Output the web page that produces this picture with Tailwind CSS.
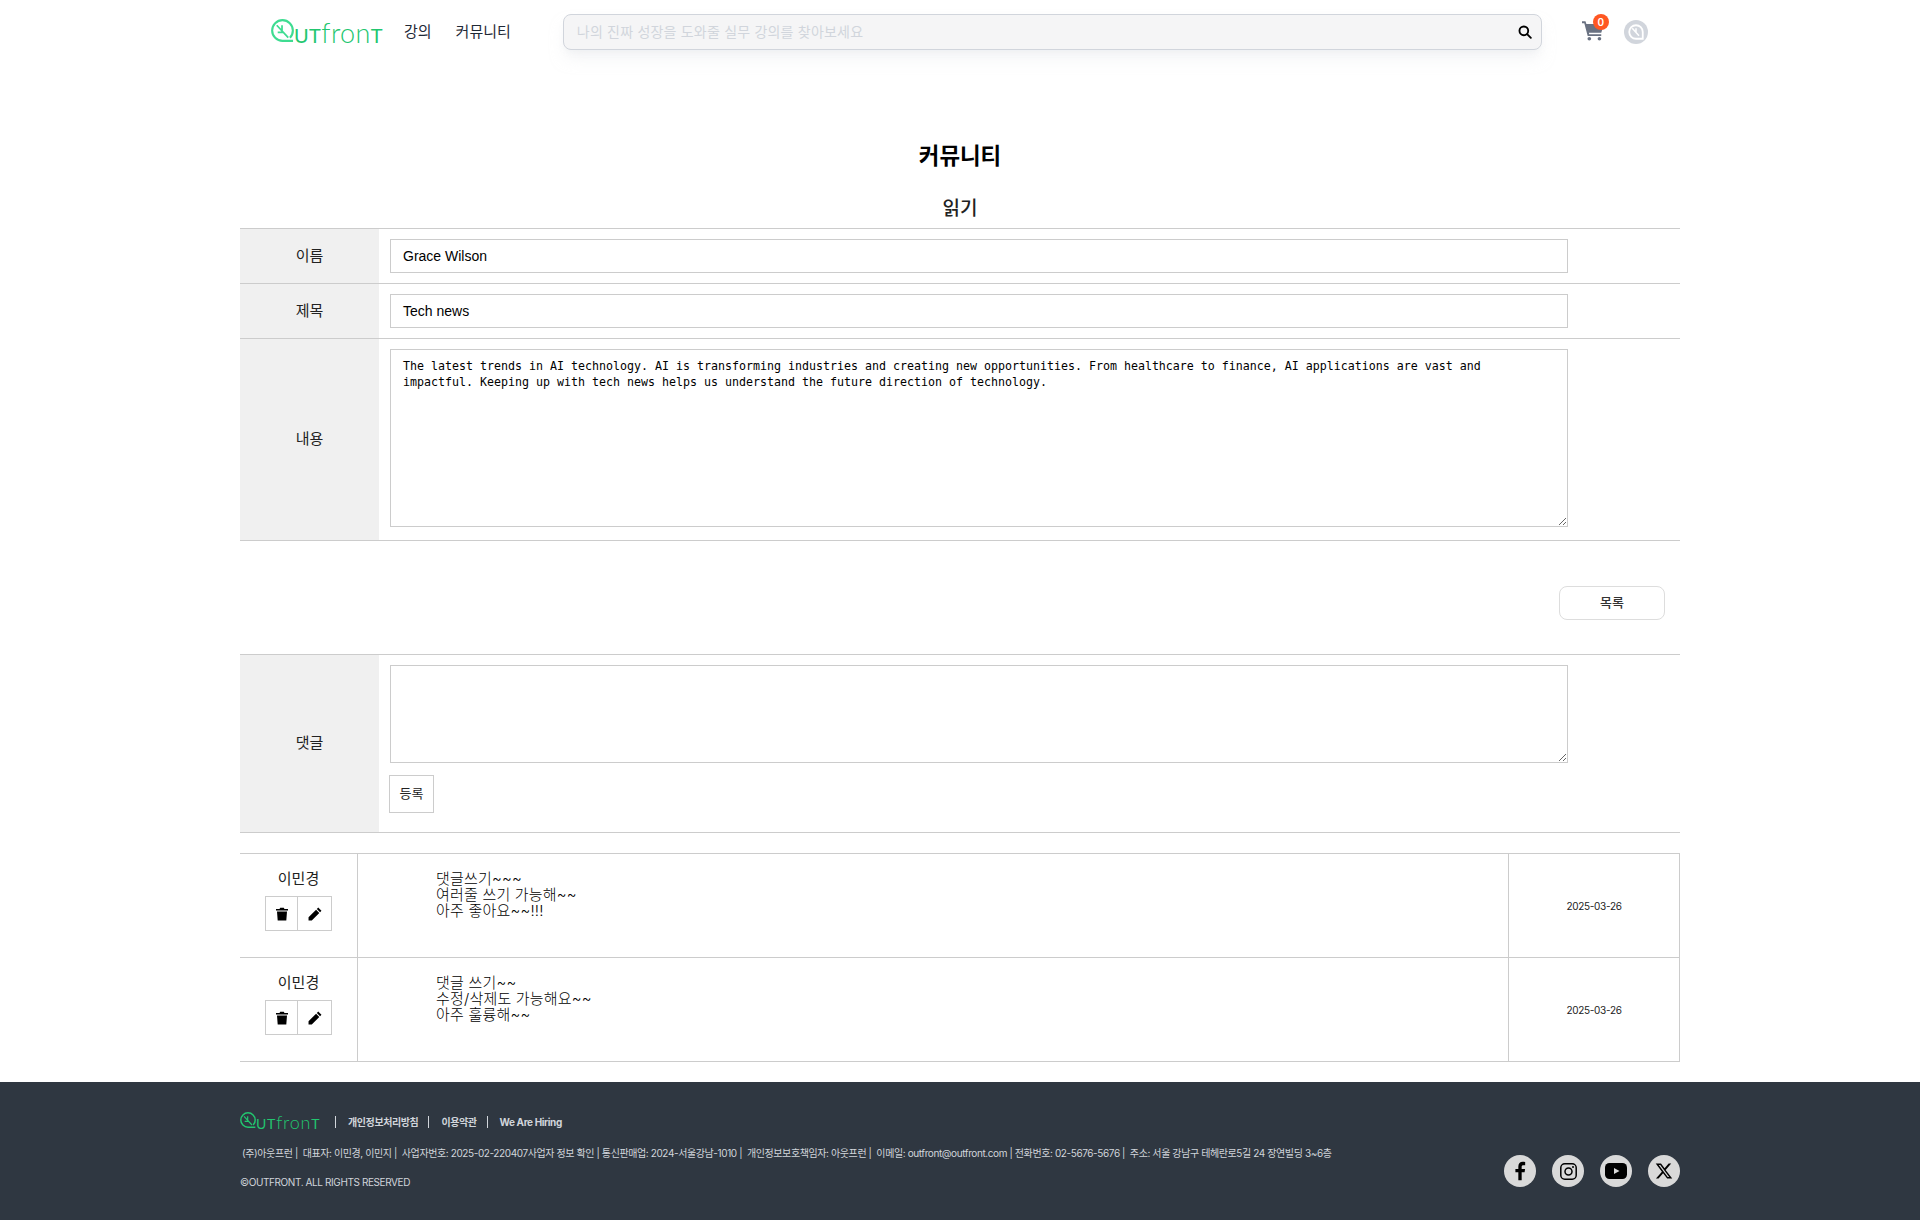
<!DOCTYPE html>
<html lang="ko">
<head>
<meta charset="utf-8" />
<script src="https://cdn.jsdelivr.net/npm/@tailwindcss/browser@4"></script>
<title>커뮤니티</title>
</head>
<body class="bg-white text-black font-['Inter','Noto_Sans_CJK_KR',sans-serif]">
    <!-- Header -->
    <header class="h-[64px] flex items-center pl-[271px]">
        <a href="#" class="flex items-end w-[133px] h-[24px] mb-[5px] text-[#22c66f]">
            <svg class="w-[23px] h-[23px] shrink-0 text-[#3edc91]" viewBox="0 0 24 24" fill="none" stroke="currentColor" stroke-width="2.200">
                <path d="M23 22.800H12A10.800 10.800 0 1 1 22.800 12c0 3-1 5.500-3 7.500" />
                <path d="M6 6.500l12 13M11.500 12.500V6.500M12.500 14H7" stroke-width="1.800" />
            </svg>
            <span class="font-['Lato',sans-serif] whitespace-nowrap leading-[18px] h-[18px] tracking-[0.400px]"><span class="text-[20px]">UT</span><span class="text-[27px] font-light">fron</span><span class="text-[20px]">T</span></span>
        </a>
        <nav class="flex items-center gap-[24px] text-[15px] text-[#1f2937]">
            <a href="#">강의</a>
            <a href="#">커뮤니티</a>
        </nav>
        <div class="ml-[52px] w-[979px] h-[36px] flex items-center justify-between rounded-lg border border-gray-300 bg-[#f5f5f6] pl-[13px] pr-[9px] shadow-lg shadow-gray-200/50">
            <span class="-mt-[1px] text-[14px] tracking-[0.200px] text-gray-300">나의 진짜 성장을 도와줄 실무 강의를 찾아보세요</span>
            <svg class="w-[14px] h-[14px]" viewBox="0 0 24 24" fill="none" stroke="black" stroke-width="3.200" stroke-linecap="round">
                <circle cx="10" cy="10" r="7.500" />
                <path d="M16 16l6 6" />
            </svg>
        </div>
        <div class="relative ml-[40px] w-[24px] h-[24px]">
            <svg class="w-[22px] h-[21px] text-gray-500" viewBox="0 0 24 22" fill="currentColor">
                <path d="M0 1h3.800l1 3H24l-3 9.500H7.500l.4 1.500H21v2H6.200L2.500 3H0z" />
                <circle cx="8" cy="20" r="2" />
                <circle cx="19" cy="20" r="2" />
            </svg>
            <span class="absolute -top-[6px] left-[11px] w-[16px] h-[16px] rounded-full bg-[#ff5722] text-white text-[10px] font-semibold leading-[16px] text-center">0</span>
        </div>
        <div class="ml-[18px] w-[24px] h-[24px] rounded-full bg-gray-300 flex items-center justify-center">
            <svg class="w-[18px] h-[18px]" viewBox="0 0 24 24" fill="none" stroke="white" stroke-width="2.400">
                <path d="M21 21H12A9 9 0 1 1 21 12z" />
                <path d="M7 7l9 10M12 12V7" stroke-width="2" />
            </svg>
        </div>
    </header>

    <main class="w-[1440px] mx-auto">
        <h1 class="mt-[76px] text-center text-[22.400px] font-bold leading-[32px]">커뮤니티</h1>
        <h2 class="mt-[23px] mb-[5px] text-center text-[19px] font-medium leading-[28px] text-[#222]">읽기</h2>

        <!-- Post -->
        <section class="border-t border-[#ccc]">
            <div class="flex h-[55px] border-b border-[#ccc]">
                <div class="w-[139px] bg-[#f0f0f0] flex items-center justify-center text-[15px] text-[#222]">이름</div>
                <div class="pl-[11px] pt-[10px]">
                    <div class="w-[1178px] h-[34px] border border-[#ccc] pl-[12px] flex items-center font-['Liberation_Sans',sans-serif] text-[14px]">Grace Wilson</div>
                </div>
            </div>
            <div class="flex h-[55px] border-b border-[#ccc]">
                <div class="w-[139px] bg-[#f0f0f0] flex items-center justify-center text-[15px] text-[#222]">제목</div>
                <div class="pl-[11px] pt-[10px]">
                    <div class="w-[1178px] h-[34px] border border-[#ccc] pl-[12px] flex items-center font-['Liberation_Sans',sans-serif] text-[14px]">Tech news</div>
                </div>
            </div>
            <div class="flex h-[202px] border-b border-[#ccc]">
                <div class="w-[139px] bg-[#f0f0f0] flex items-center justify-center text-[15px] text-[#222]">내용</div>
                <div class="pl-[11px] pt-[10px]">
                    <textarea readonly class="block w-[1178px] h-[178px] border border-[#ccc] px-[12px] py-[8px] font-['DejaVu_Sans_Mono',monospace] text-[11.630px] leading-[16px] outline-none">The latest trends in AI technology. AI is transforming industries and creating new opportunities. From healthcare to finance, AI applications are vast and impactful. Keeping up with tech news helps us understand the future direction of technology.</textarea>
                </div>
            </div>
        </section>

        <div class="h-[113px] pt-[45px] flex justify-end pr-[15px]">
            <button class="w-[106px] h-[34px] rounded-lg border border-[#ddd] bg-white text-[13px] font-medium text-[#333]">목록</button>
        </div>

        <!-- Reply form -->
        <section class="flex h-[179px] border-y border-[#ccc]">
            <div class="w-[139px] bg-[#f0f0f0] flex items-center justify-center text-[15px] text-[#222]">댓글</div>
            <div class="pl-[11px] pt-[10px]">
                <textarea class="block w-[1178px] h-[98px] border border-[#ccc] outline-none"></textarea>
                <button class="mt-[12px] -ml-[1px] block w-[45px] h-[38px] border border-[#ccc] bg-white text-[13px] text-[#222]">등록</button>
            </div>
        </section>

        <!-- Replies -->
        <section class="mt-[20px] border border-[#ccc] border-l-0">
            <div class="flex h-[104px] border-b border-[#ccc]">
                <div class="w-[118px] shrink-0 border-r border-[#ccc] flex flex-col items-center pt-[15px]">
                    <span class="text-[15px] leading-[20px] text-[#222]">이민경</span>
                    <div class="mt-[7px] flex h-[35px] border border-[#ccc]">
                        <button class="w-[32px] flex items-center justify-center border-r border-[#ccc]">
                            <svg class="w-[12px] h-[14px]" viewBox="0 0 12 13" fill="black"><path d="M0 1.500h3.500L4.200.300h3.600l.7 1.200H12V3H0zM1 4h10l-.7 9H1.700z" /></svg>
                        </button>
                        <button class="w-[33px] flex items-center justify-center">
                            <svg class="w-[14px] h-[14px]" viewBox="0 0 13 13" fill="black"><path d="M9.500.500l3 3-1.300 1.300-3-3zM7.500 2.500l3 3-7 7H.500v-3z" /></svg>
                        </button>
                    </div>
                </div>
                <div class="flex-1 border-r border-[#ccc] pl-[78px] pt-[17px] text-[15px] leading-[16px] tracking-[0.200px] font-light text-black">
                    <p>댓글쓰기~~~</p>
                    <p>여러줄 쓰기 가능해~~</p>
                    <p>아주 좋아요~~!!!</p>
                </div>
                <div class="w-[170px] shrink-0 pt-[2px] flex items-center justify-center text-[10px] tracking-[-0.300px] text-[#222]">2025-03-26</div>
            </div>
            <div class="flex h-[103px]">
                <div class="w-[118px] shrink-0 border-r border-[#ccc] flex flex-col items-center pt-[15px]">
                    <span class="text-[15px] leading-[20px] text-[#222]">이민경</span>
                    <div class="mt-[7px] flex h-[35px] border border-[#ccc]">
                        <button class="w-[32px] flex items-center justify-center border-r border-[#ccc]">
                            <svg class="w-[12px] h-[14px]" viewBox="0 0 12 13" fill="black"><path d="M0 1.500h3.500L4.200.300h3.600l.7 1.200H12V3H0zM1 4h10l-.7 9H1.700z" /></svg>
                        </button>
                        <button class="w-[33px] flex items-center justify-center">
                            <svg class="w-[14px] h-[14px]" viewBox="0 0 13 13" fill="black"><path d="M9.500.500l3 3-1.300 1.300-3-3zM7.500 2.500l3 3-7 7H.500v-3z" /></svg>
                        </button>
                    </div>
                </div>
                <div class="flex-1 border-r border-[#ccc] pl-[78px] pt-[17px] text-[15px] leading-[16px] tracking-[0.200px] font-light text-black">
                    <p>댓글 쓰기~~</p>
                    <p>수정/삭제도 가능해요~~</p>
                    <p>아주 훌륭해~~</p>
                </div>
                <div class="w-[170px] shrink-0 pt-[2px] flex items-center justify-center text-[10px] tracking-[-0.300px] text-[#222]">2025-03-26</div>
            </div>
        </section>
    </main>

    <!-- Footer -->
    <footer class="mt-[20px] h-[138px] bg-[#2f3741] text-[#d1d5db]">
        <div class="w-[1440px] mx-auto flex justify-between">
            <div>
                <div class="pt-[28px] flex items-center h-[52px]">
                    <div class="flex items-end w-[80px] h-[16px] mb-[4px] text-[#22c66f]">
                        <svg class="w-[16px] h-[16px] shrink-0" viewBox="0 0 24 24" fill="none" stroke="currentColor" stroke-width="2.200">
                            <path d="M23 22.800H12A10.800 10.800 0 1 1 22.800 12c0 3-1 5.500-3 7.500" />
                            <path d="M6 6.500l12 13M11.500 12.500V6.500M12.500 14H7" stroke-width="1.800" />
                        </svg>
                        <span class="font-['Lato',sans-serif] whitespace-nowrap leading-[12px] h-[12px] tracking-[0.800px]"><span class="text-[14px]">UT</span><span class="text-[18px] font-light">fron</span><span class="text-[14px]">T</span></span>
                    </div>
                    <div class="flex items-center text-[10px] font-bold tracking-[-0.400px]">
                        <span class="ml-[15px] h-[12px] border-l border-[#d1d5db]"></span>
                        <a href="#" class="ml-[12px]">개인정보처리방침</a>
                        <span class="ml-[10px] h-[12px] border-l border-[#d1d5db]"></span>
                        <a href="#" class="ml-[12px]">이용약관</a>
                        <span class="ml-[10px] h-[12px] border-l border-[#d1d5db]"></span>
                        <a href="#" class="ml-[12px]">We Are Hiring</a>
                    </div>
                </div>
                <p class="mt-[11px] pl-[2px] text-[10px] leading-[16px] tracking-[-0.400px] whitespace-nowrap">(주)아웃프런 |&nbsp; 대표자: 이민경, 이민지 |&nbsp; 사업자번호: 2025-02-220407사업자 정보 확인 | 통신판매업: 2024-서울강남-1010 |&nbsp; 개인정보보호책임자: 아웃프런 |&nbsp; 이메일: outfront@outfront.com | 전화번호: 02-5676-5676 |&nbsp; 주소: 서울 강남구 테헤란로5길 24 장연빌딩 3~6층</p>
                <p class="mt-[13px] text-[10px] leading-[16px] tracking-[-0.400px]">©OUTFRONT. ALL RIGHTS RESERVED</p>
            </div>
            <div class="flex gap-[16px] pt-[73px]">
                <a href="#" class="w-[32px] h-[32px] rounded-full bg-[#d9d9d9] flex items-center justify-center">
                    <svg class="w-[20px] h-[20px]" viewBox="0 0 24 24" fill="black"><path d="M14 23v-9.500h3.500l.6-4H14V7c0-1.200.5-2 2.200-2h2V1.300C17.700 1.200 16.500 1 15.300 1 12 1 10 3 10 6.500v3H6.500v4H10V23z" /></svg>
                </a>
                <a href="#" class="w-[32px] h-[32px] rounded-full bg-[#d9d9d9] flex items-center justify-center">
                    <svg class="w-[17px] h-[17px]" viewBox="0 0 17 17" fill="none" stroke="black" stroke-width="1.500"><rect x=".8" y=".8" width="15.400" height="15.400" rx="4" /><circle cx="8.500" cy="8.500" r="3.500" /><circle cx="13" cy="4" r="1" fill="black" stroke="none" /></svg>
                </a>
                <a href="#" class="w-[32px] h-[32px] rounded-full bg-[#d9d9d9] flex items-center justify-center">
                    <svg class="w-[22px] h-[16px]" viewBox="0 0 22 16"><rect width="22" height="16" rx="4.500" fill="black" /><path d="M9 5l5.500 3L9 11z" fill="#d9d9d9" /></svg>
                </a>
                <a href="#" class="w-[32px] h-[32px] rounded-full bg-[#d9d9d9] flex items-center justify-center">
                    <svg class="w-[18px] h-[18px]" viewBox="0 0 24 24" fill="black"><path d="M18.200 2h3.400l-7.400 8.500L23 22h-6.800l-5.400-7-6.100 7H1.300l7.900-9.100L1 2h7l4.800 6.400zm-1.200 18h1.900L7 3.900H5z" /></svg>
                </a>
            </div>
        </div>
    </footer>
</body>
</html>
